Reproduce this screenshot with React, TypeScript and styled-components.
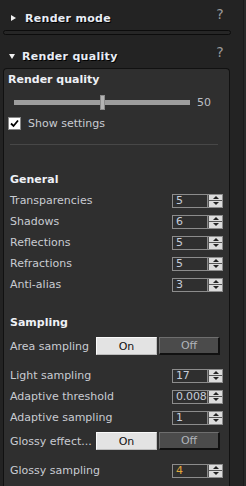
import React from 'react';
import styled, { createGlobalStyle } from 'styled-components';

const Global = createGlobalStyle`
  html, body {
    margin: 0;
    padding: 0;
    background: #232323;
    height: 100%;
    overflow: hidden;
  }
  body {
    font-family: "DejaVu Sans", Verdana, sans-serif;
    font-size: 11px;
  }
`

const Page = styled.div`
  display: flex;
  height: 486px;
`

const Main = styled.div`
  width: 243px;
  display: flex;
  flex-direction: column;
`

const Side = styled.div`
  flex: 1;
  border-left: 1px solid #1a1a1a;
  background: #292929;
`

const Header = styled.div<{ $top: number }>`
  display: flex;
  align-items: center;
  height: 24px;
  margin-top: ${p => p.$top}px;
  padding-left: 9px;
  color: #e8edf5;
  font-weight: bold;
  letter-spacing: 0.3px;
  text-shadow: 1px 1px 0 #000;
`

const Arrow = styled.span<{ $open?: boolean }>`
  width: 0;
  height: 0;
  margin-right: 7px;
  ${p => p.$open
    ? `border-left: 3.5px solid transparent; border-right: 3.5px solid transparent; border-top: 5px solid #f0f0f0; margin-left: 0;`
    : `border-top: 3.5px solid transparent; border-bottom: 3.5px solid transparent; border-left: 5px solid #f0f0f0; margin-left: 2px; margin-right: 9px;`}
`

const Help = styled.span`
  margin-left: auto;
  margin-right: 19px;
  align-self: flex-start;
  margin-top: 1px;
  font-weight: normal;
  font-size: 14px;
  line-height: 14px;
  color: #9a9a9a;
  text-shadow: none;
`

const Collapsed = styled.div`
  margin-left: 3px;
  width: 228px;
  height: 5px;
  box-sizing: border-box;
  border: 1px solid #0c0c0c;
  border-radius: 3px;
  background: #262626;
`

const Panel = styled.div`
  margin-left: 3px;
  width: 227px;
  flex: 1;
  box-sizing: border-box;
  border: 1px solid #111;
  border-bottom: none;
  border-radius: 4px 4px 0 0;
  background: #2f2f2f;
  padding: 0 6px;
  color: #c9ccd2;
`

const Title = styled.div<{ $top: number; $left?: number }>`
  font-weight: bold;
  color: #eef1f6;
  line-height: 14px;
  margin-top: ${p => p.$top}px;
  margin-left: ${p => p.$left ?? 0}px;
`

const SliderRow = styled.div`
  display: flex;
  align-items: center;
  height: 14px;
  margin-top: 8px;
  margin-left: 4px;
`

const Track = styled.div`
  position: relative;
  width: 176px;
  height: 5px;
  background: #9d9d9d;
`

const Thumb = styled.div`
  position: absolute;
  top: -5px;
  width: 3px;
  height: 13px;
  background: #b4b4b4;
  border: 1px solid #8a8a8a;
  box-sizing: content-box;
`

const SliderValue = styled.span`
  margin-left: 7px;
  color: #bcbfc4;
`

const CheckRow = styled.label`
  display: flex;
  align-items: center;
  height: 14px;
  margin-top: 7px;
  margin-left: -2px;
`

const Box = styled.span`
  width: 13px;
  height: 13px;
  box-sizing: border-box;
  background: #fff;
  border: 1px solid #888;
  display: flex;
  align-items: center;
  justify-content: center;
  margin-right: 7px;
`

const Divider = styled.div`
  height: 1px;
  background: #474747;
  margin: 14px 5px 0 0;
`

const Row = styled.div<{ $top?: number }>`
  display: flex;
  align-items: center;
  justify-content: space-between;
  height: 21px;
  margin-top: ${p => p.$top ?? 0}px;
`

const Spinner = styled.div`
  display: flex;
  width: 51px;
  height: 14px;
  box-sizing: border-box;
  border: 1px solid #8c8c8c;
`

const SpinValue = styled.span<{ $accent?: boolean }>`
  flex: 1;
  padding-left: 3px;
  line-height: 12px;
  border-right: 1px solid #8c8c8c;
  color: ${p => p.$accent ? '#e0a83a' : '#c6cdd9'};
  letter-spacing: -0.2px;
`

const Steps = styled.div`
  width: 13px;
  display: flex;
  flex-direction: column;
  gap: 1px;
  padding: 0 0 0 1px;
  background: #555;
`

const Step = styled.div<{ $down?: boolean }>`
  flex: 1;
  background: #dcdcdc;
  display: flex;
  align-items: center;
  justify-content: center;
  &::after {
    content: '';
    width: 0;
    height: 0;
    border-left: 3px solid transparent;
    border-right: 3px solid transparent;
    ${p => p.$down ? 'border-top: 3px solid #222;' : 'border-bottom: 3px solid #222;'}
  }
`

const ToggleRow = styled.div<{ $top: number }>`
  display: flex;
  align-items: center;
  height: 22px;
  margin-top: ${p => p.$top}px;
`

const ToggleLabel = styled.span`
  width: 86px;
  white-space: nowrap;
`

const Toggle = styled.div`
  display: flex;
  gap: 2px;
`

const ToggleButton = styled.div<{ $on?: boolean }>`
  width: 61px;
  height: 18px;
  box-sizing: border-box;
  display: flex;
  align-items: center;
  justify-content: center;
  ${p => p.$on
    ? `background: #e3e3e3; color: #111; border: 1px solid #fafafa; border-right-color: #bbb; border-bottom-color: #bbb;`
    : `background: #4b4b4b; color: #b0b4ba; border: 1px solid #6e6e6e; border-right: 2px solid #111; border-bottom: 2px solid #111;`}
`

function Spin({ value, accent }: { value: string; accent?: boolean }) {
  return (
    <Spinner>
      <SpinValue $accent={accent}>{value}</SpinValue>
      <Steps>
        <Step />
        <Step $down />
      </Steps>
    </Spinner>
  )
}

function OnOff({ label, top }: { label: string; top: number }) {
  return (
    <ToggleRow $top={top}>
      <ToggleLabel>{label}</ToggleLabel>
      <Toggle>
        <ToggleButton $on>On</ToggleButton>
        <ToggleButton>Off</ToggleButton>
      </Toggle>
    </ToggleRow>
  )
}

const general = [
  ['Transparencies', '5'],
  ['Shadows', '6'],
  ['Reflections', '5'],
  ['Refractions', '5'],
  ['Anti-alias', '3'],
]

function App() {
  return (
    <Page>
      <Global />
      <Main>
        <Header $top={6}>
          <Arrow />
          Render mode
          <Help>?</Help>
        </Header>
        <Collapsed />
        <Header $top={9}>
          <Arrow $open />
          Render quality
          <Help>?</Help>
        </Header>
        <Panel>
          <Title $top={4} $left={-2}>Render quality</Title>
          <SliderRow>
            <Track>
              <Thumb style={{ left: `${0.5 * 176 - 2}px` }} />
            </Track>
            <SliderValue>50</SliderValue>
          </SliderRow>
          <CheckRow>
            <Box>
              <svg width="9" height="9" viewBox="0 0 9 9">
                <path d="M1 4.5 L3.5 7 L8 1.5" stroke="#000" strokeWidth="1.8" fill="none" />
              </svg>
            </Box>
            Show settings
          </CheckRow>
          <Divider />
          <Title $top={28}>General</Title>
          {general.map(([label, value], i) => (
            <Row key={label} $top={i === 0 ? 3 : 0}>
              <span>{label}</span>
              <Spin value={value} />
            </Row>
          ))}
          <Title $top={21}>Sampling</Title>
          <OnOff label="Area sampling" top={5} />
          <Row $top={8}>
            <span>Light sampling</span>
            <Spin value="17" />
          </Row>
          <Row>
            <span>Adaptive threshold</span>
            <Spin value="0.008" />
          </Row>
          <Row>
            <span>Adaptive sampling</span>
            <Spin value="1" />
          </Row>
          <OnOff label="Glossy effect..." top={2} />
          <Row $top={8}>
            <span>Glossy sampling</span>
            <Spin value="4" accent />
          </Row>
        </Panel>
      </Main>
      <Side />
    </Page>
  )
}

export default App
